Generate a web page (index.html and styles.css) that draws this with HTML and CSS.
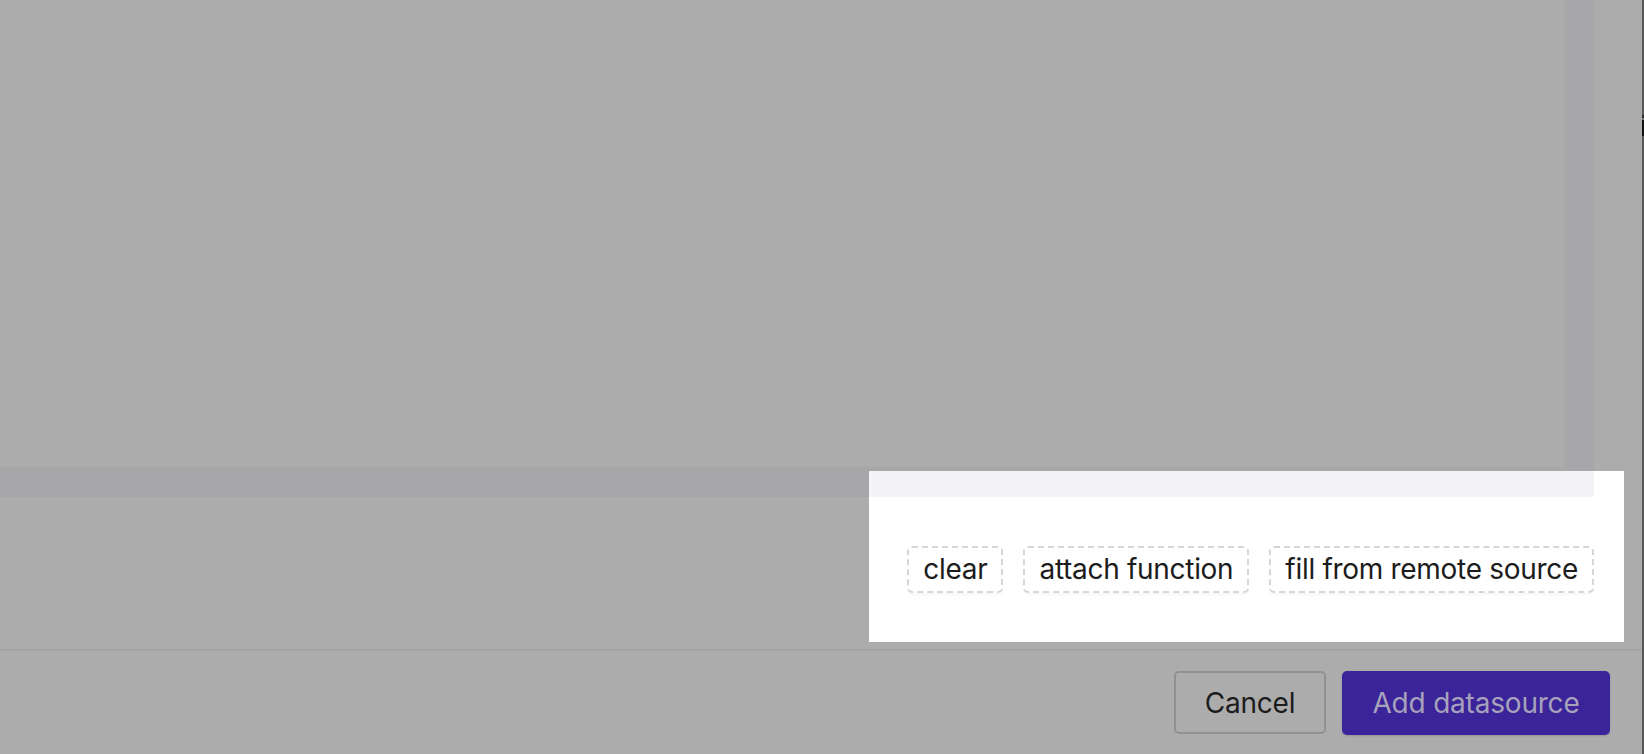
FILE: index.html
```html
<!DOCTYPE html>
<html lang="en">
<head>
<meta charset="utf-8">
<title>Add datasource</title>
<link rel="stylesheet" href="styles.css">
</head>
<body>
<div class="screen">
  <div class="app">
    <div class="workspace">
      <div class="upper">
        <div class="grid"></div>
        <div class="vtrack"></div>
        <div class="gutter"></div>
      </div>
      <div class="lower">
        <div class="htrack"></div>
      </div>
      <div class="spotlight">
        <div class="spot-strip"></div>
        <div class="chips">
          <span class="chip">clear</span>
          <span class="chip">attach function</span>
          <span class="chip">fill from remote source</span>
        </div>
      </div>
    </div>
    <div class="footer">
      <button class="btn btn-cancel" type="button">Cancel</button>
      <button class="btn btn-primary" type="button">Add datasource</button>
    </div>
  </div>
  <div class="edge">
    <span class="mark-a"></span>
    <span class="mark-b"></span>
    <span class="mark-c"></span>
  </div>
</div>
</body>
</html>
```

FILE: styles.css
```css
html, body {
  margin: 0;
  padding: 0;
}
body {
  background: #acacac;
  font-family: Inter, "Noto Sans", sans-serif;
  overflow: hidden;
}
.screen {
  display: flex;
  width: 1644px;
  height: 754px;
}
.app {
  flex: 1;
  display: flex;
  flex-direction: column;
  min-width: 0;
}
.workspace {
  position: relative;
  height: 649px;
}
.upper {
  display: flex;
  height: 467px;
}
.grid {
  flex: 1;
}
.vtrack {
  width: 30px;
  background: #a7a7a9;
}
.gutter {
  width: 48px;
}
.lower {
  height: 182px;
}
.htrack {
  width: 1594px;
  height: 30px;
  background: #a7a7a9;
}
.spotlight {
  position: absolute;
  left: 869px;
  top: 471px;
  width: 755px;
  height: 171px;
  background: #ffffff;
  display: flex;
  flex-direction: column;
}
.spot-strip {
  width: 725px;
  height: 26px;
  background: #f4f4f6;
}
.chips {
  flex: 1;
  display: flex;
  align-items: center;
  justify-content: flex-end;
  gap: 20px;
  padding-right: 30px;
}
.chip {
  display: inline-block;
  border: 2px dashed #d6d6d6;
  border-radius: 5px;
  padding: 0 14px;
  height: 43px;
  line-height: 43px;
  font-size: 28px;
  letter-spacing: -0.3px;
  color: #1c1c1c;
  box-shadow: 0 2px 2px rgba(0, 0, 0, 0.03);
}
.footer {
  flex: 1;
  border-top: 2px solid #a3a3a3;
  display: flex;
  justify-content: flex-end;
  align-items: flex-start;
  gap: 16px;
  padding: 20px 32px 0 0;
}
.btn {
  font-family: Inter, "Noto Sans", sans-serif;
  font-size: 28px;
  letter-spacing: -0.2px;
  height: 63px;
  border-radius: 5px;
  cursor: pointer;
  margin: 0;
}
.btn-cancel {
  width: 152px;
  background: #acacac;
  border: 2px solid #919191;
  color: #1c1c1c;
}
.btn-primary {
  width: 268px;
  height: 64px;
  background: #3b2399;
  border: none;
  color: #a6a2bb;
  box-shadow: 0 1px 2px rgba(0, 0, 0, 0.15);
}
.edge {
  width: 2px;
  background: #585858;
  display: flex;
  flex-direction: column;
  padding-top: 115px;
}
.mark-a {
  height: 3px;
  background: #2a2a2a;
}
.mark-b {
  height: 2px;
  background: #7a7a7a;
}
.mark-c {
  height: 16px;
  background: #111111;
}
```
